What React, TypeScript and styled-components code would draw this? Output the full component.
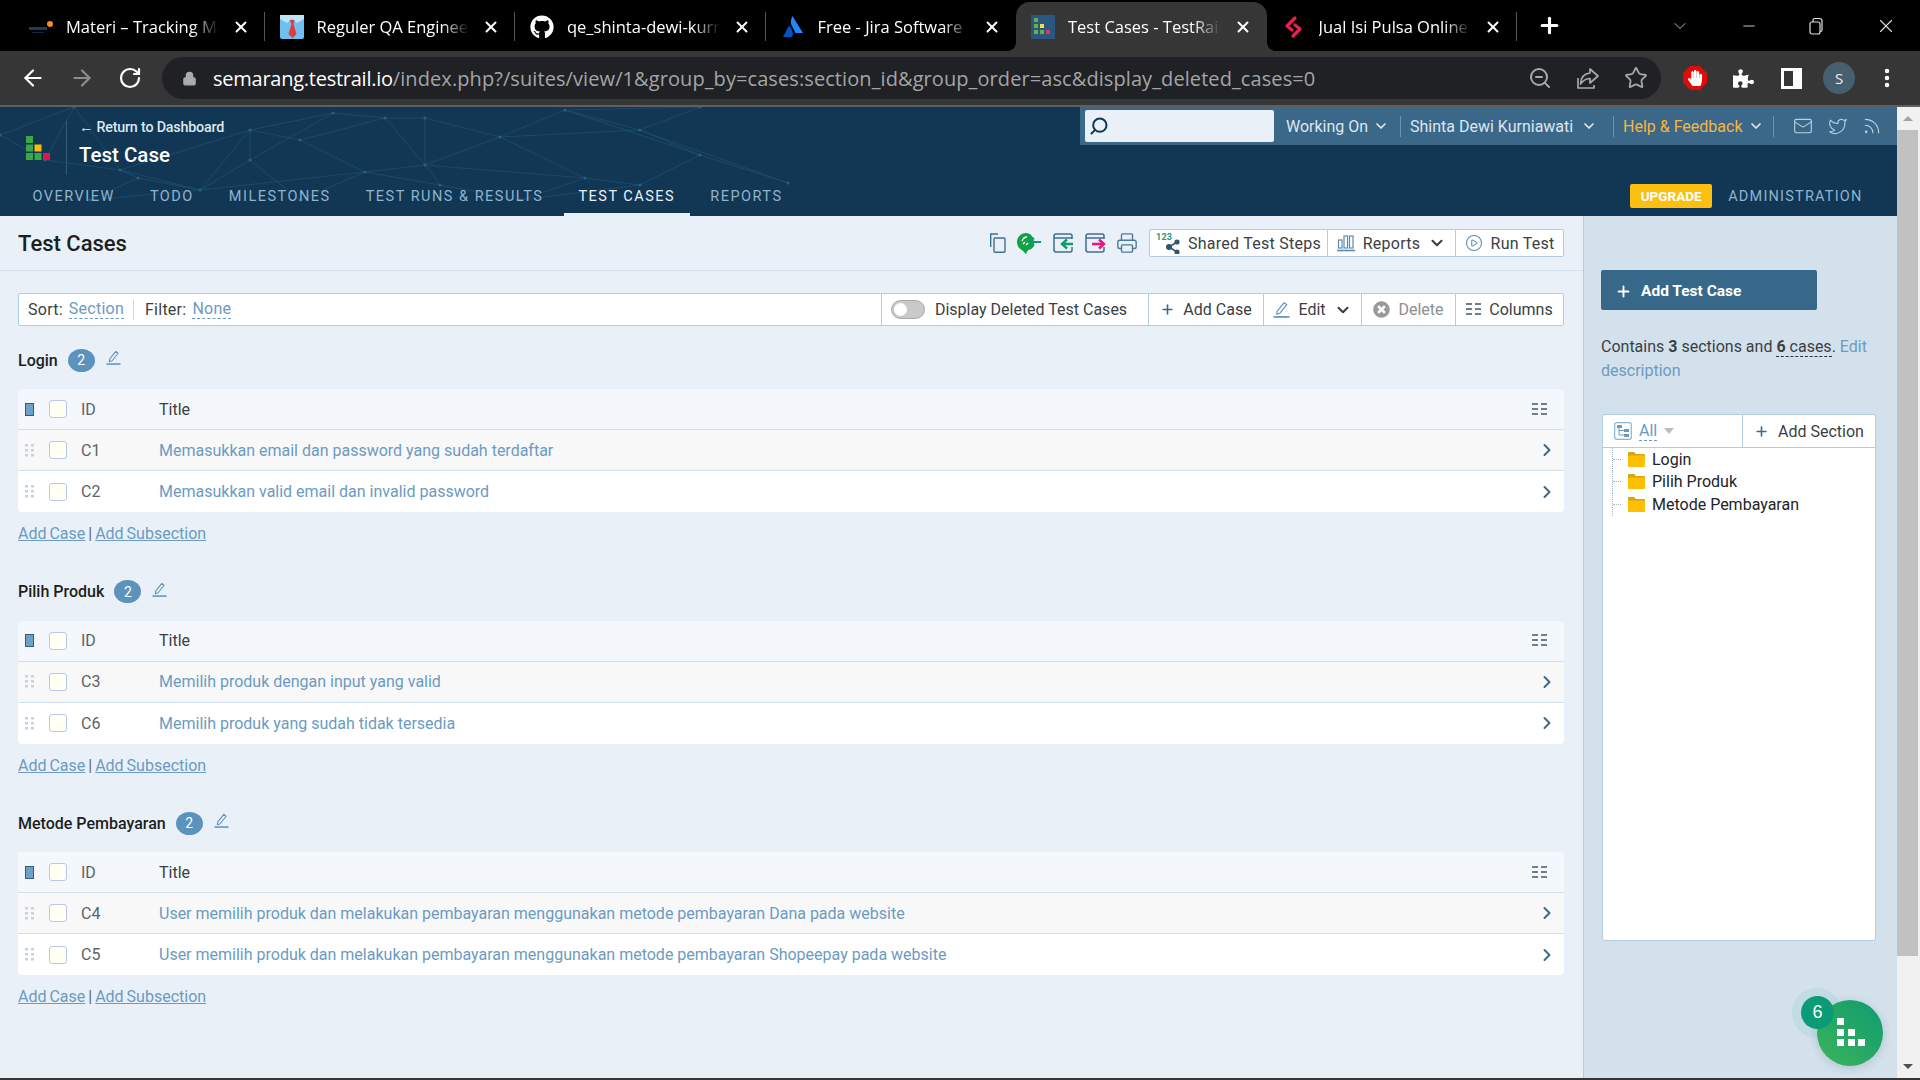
import React from "react";
import styled, { createGlobalStyle } from "styled-components";
import {
  ArrowLeft,
  ArrowRight,
  RotateCw,
  Lock,
  ZoomOut,
  Star,
  MoreVertical,
  ChevronDown,
  ChevronRight,
  Plus,
  Printer,
  Mail,
  Twitter,
  Rss,
  X,
  Minus,
  PlayCircle,
  Search
} from "lucide-react";
import { FaGithub, FaPuzzlePiece, FaHandPaper, FaTimesCircle } from "react-icons/fa";

const PAGE_FONT = `"Roboto", "Liberation Sans", sans-serif`;
const CHROME_FONT = `"Open Sans", "Noto Sans", sans-serif`;

const GlobalStyle = createGlobalStyle`
  html, body { margin: 0; padding: 0; height: 100%; overflow: hidden; }
  #root { height: 100%; }
  * { box-sizing: border-box; }
`;

// --- browser chrome ---

const tabs = [
  { title: "Materi – Tracking Materi", icon: "alterra" },
  { title: "Reguler QA Engineer", icon: "tie" },
  { title: "qe_shinta-dewi-kurniawati", icon: "github" },
  { title: "Free - Jira Software", icon: "jira" },
  { title: "Test Cases - TestRail", icon: "testrail", active: true },
  { title: "Jual Isi Pulsa Online", icon: "pulsa" }
];

const TabIcon: React.FC<{ kind: string }> = ({ kind }) => {
  switch (kind) {
    case "alterra":
      return (
        <svg width="24" height="24" viewBox="0 0 24 24">
          <rect x="0" y="12" width="18" height="3" fill="#1d3a5f" />
          <rect x="3" y="17" width="12" height="1" fill="#16263b" />
          <circle cx="21" cy="9" r="3" fill="#f28a2e" />
        </svg>
      );
    case "tie":
      return (
        <svg width="24" height="24" viewBox="0 0 24 24">
          <rect width="24" height="24" rx="2" fill="#6fc0f0" />
          <path d="M0 0h24v4l-7 4-5-4-5 4-7-4z" fill="#bfe3f8" />
          <path d="M9.5 5h5l-1 4 3 10-4 4-4-4 3-10z" fill="#e5383b" />
        </svg>
      );
    case "github":
      return <FaGithub size={24} color="#fff" />;
    case "jira":
      return (
        <svg width="24" height="24" viewBox="0 0 24 24">
          <path d="M11.5 1c-2 4-2.300 7 0 11l3 6h7.500z" fill="#2684ff" />
          <path d="M8 10.500 2 22h9c1.500-3 1-7-3-11.500z" fill="#0052cc" />
        </svg>
      );
    case "testrail":
      return (
        <svg width="24" height="24" viewBox="0 0 24 24">
          <rect width="24" height="24" fill="#2b5680" />
          <rect x="3" y="3" width="4" height="4" fill="#65b344" />
          <rect x="3" y="9" width="4" height="4" fill="#65b344" />
          <rect x="9" y="9" width="4" height="4" fill="#eee04a" />
          <rect x="3" y="15" width="4" height="4" fill="#65b344" />
          <rect x="9" y="15" width="4" height="4" fill="#65b344" />
          <rect x="15" y="15" width="4" height="4" fill="#e2384f" />
        </svg>
      );
    default:
      return (
        <svg width="24" height="24" viewBox="0 0 24 24" fill="none" stroke="#e3234d" strokeWidth="3.200" strokeLinecap="round" strokeLinejoin="round">
          <path d="M13 3 5 11l5 4" />
          <path d="M13 10l5 4-7 7" />
        </svg>
      );
  }
};

const TabStrip = styled.div`
  height: 51px;
  background: #000;
  display: flex;
  align-items: stretch;
  padding-left: 14px;
  font-family: ${CHROME_FONT};
  flex: none;
`;
const Tab = styled.div<{ $active?: boolean; $divider?: boolean }>`
  width: 250.500px;
  margin-top: 2px;
  padding: 0 15px 0 15px;
  display: flex;
  align-items: center;
  gap: 13px;
  color: #fff;
  font-size: 16.500px;
  border-radius: 14px 14px 0 0;
  background: ${p => (p.$active ? "#363636" : "transparent")};
  position: relative;
  ${p =>
    p.$divider &&
    `&::after {
      content: "";
      position: absolute;
      right: 0;
      top: 10px;
      bottom: 10px;
      width: 1px;
      background: #555;
    }`}
  ${p =>
    p.$active &&
    `&::before, &::after {
      content: "";
      position: absolute;
      bottom: 0;
      width: 8px;
      height: 8px;
    }
    &::before {
      left: -8px;
      background: radial-gradient(circle at 0 0, #000 7.5px, #363636 8px);
    }
    &::after {
      right: -8px;
      background: radial-gradient(circle at 100% 0, #000 7.5px, #363636 8px);
    }`}
`;
const TabTitle = styled.span`
  flex: 1;
  white-space: nowrap;
  overflow: hidden;
  mask-image: linear-gradient(to right, #000 82%, transparent 100%);
`;
const NewTab = styled.div`
  width: 64px;
  display: flex;
  align-items: center;
  justify-content: center;
  color: #fff;
`;
const WindowButtons = styled.div`
  margin-left: auto;
  display: flex;
  align-items: center;
  color: #ddd;
  padding-right: 23px;
  gap: 49.700px;
`;
const RestoreIcon = () => (
  <svg width="18" height="18" viewBox="0 0 18 18" fill="none" stroke="#ddd" strokeWidth="1.200">
    <rect x="3" y="5" width="10" height="12" rx="2" />
    <path d="M6 5V3a1.500 1.500 0 0 1 1.500-1.500h5A2.500 2.500 0 0 1 15 4v9a1.500 1.500 0 0 1-1.500 1.500H13" />
  </svg>
);

const BrowserBar = styled.div`
  height: 56px;
  flex: none;
  background: #363636;
  border-bottom: 2px solid #5f5f5f;
  display: flex;
  align-items: center;
  padding: 0 0 0 20px;
  font-family: ${CHROME_FONT};
`;
const NavIcons = styled.div`
  width: 142px;
  display: flex;
  align-items: center;
  gap: 23px;
`;
const UrlPill = styled.div`
  width: 1499px;
  height: 42px;
  flex: none;
  background: #202124;
  border-radius: 21px;
  display: flex;
  align-items: center;
  padding: 0 13px 0 20px;
  font-size: 20px;
  color: #a3a5a8;
  white-space: nowrap;
`;
const UrlHost = styled.span`
  color: #fff;
  margin-left: 16px;
  letter-spacing: -0.250px;
`;
const UrlPath = styled.span`
  letter-spacing: 0.085px;
`;
const UrlIcons = styled.div`
  margin-left: auto;
  display: flex;
  align-items: center;
  gap: 24px;
`;
const ToolbarIcons = styled.div`
  display: grid;
  grid-template-columns: repeat(5, 48px);
  justify-items: center;
  align-items: center;
  padding-left: 10px;
`;
const StopBadge = styled.div`
  width: 24px;
  height: 24px;
  background: #e20b0b;
  clip-path: polygon(30% 0, 70% 0, 100% 30%, 100% 70%, 70% 100%, 30% 100%, 0 70%, 0 30%);
  display: flex;
  align-items: center;
  justify-content: center;
  color: #fff;
`;
const PanelIcon = styled.div`
  width: 21px;
  height: 21px;
  border: 3px solid #fff;
  border-right-width: 9px;
  background: #363636;
`;
const Avatar = styled.div`
  width: 32px;
  height: 32px;
  border-radius: 50%;
  background: #46606f;
  color: #eee;
  font-size: 15px;
  display: flex;
  align-items: center;
  justify-content: center;
`;
const ShareIcon = () => (
  <svg width="24" height="24" viewBox="0 0 24 24" fill="none" stroke="#a6a8ab" strokeWidth="1.700" strokeLinejoin="round">
    <path d="M2 12v10h16v-3" />
    <path d="M14 3v4C8 7.500 5 11 4.500 18c3-4 5-5.500 9.500-5.500V17l8-7z" />
  </svg>
);

// --- testrail header ---

const Viewport = styled.div`
  flex: 1;
  min-height: 0;
  display: flex;
  border-bottom: 2px solid #363636;
  position: relative;
`;
const PageColumn = styled.div`
  flex: 1;
  min-width: 0;
  display: flex;
  flex-direction: column;
  font-family: ${PAGE_FONT};
`;
const Header = styled.header`
  height: 109px;
  flex: none;
  background: #113754;
  position: relative;
  display: flex;
  flex-direction: column;
  overflow: hidden;
`;
const HeaderPattern = styled.svg`
  position: absolute;
  left: 0;
  top: 0;
`;
const HeaderTop = styled.div`
  height: 71px;
  display: flex;
  align-items: flex-start;
  justify-content: space-between;
  position: relative;
`;
const Brand = styled.div`
  display: flex;
  align-items: center;
  padding: 12px 0 0 26px;
`;
const LogoDivider = styled.div`
  width: 1px;
  height: 54px;
  background: #2f5d7e;
  margin: 0 12px 0 16px;
`;
const BrandText = styled.div`
  color: #dbe7f1;
  margin-bottom: 10px;
`;
const BackLink = styled.div`
  font-size: 14.300px;
  font-weight: 500;
  letter-spacing: -0.200px;
`;
const ProjectName = styled.div`
  font-size: 20.500px;
  font-weight: 500;
  color: #fff;
  margin-top: 8px;
`;
const TopMenu = styled.div`
  width: 817px;
  height: 38px;
  background: #3b6888;
  display: flex;
  align-items: center;
  padding-left: 5px;
  font-size: 16px;
  color: #dbe7f1;
`;
const SearchBox = styled.div`
  width: 189px;
  height: 32px;
  background: #e9f0f7;
  border-radius: 2px;
  display: flex;
  align-items: center;
  padding-left: 4px;
  color: #113754;
  margin-right: 12px;
`;
const MenuItem = styled.div<{ $help?: boolean; $w: number; $gap: number }>`
  width: ${p => p.$w}px;
  height: 21px;
  display: flex;
  align-items: center;
  gap: ${p => p.$gap}px;
  border-right: 1px solid #6b94b3;
  color: ${p => (p.$help ? "#f6b73c" : "#dbe7f1")};
  white-space: nowrap;
  margin-right: 9px;
`;
const MenuIcons = styled.div`
  display: flex;
  align-items: center;
  gap: 14.500px;
  margin-left: 10px;
  color: #bcd2e2;
`;
const NavRow = styled.nav`
  height: 38px;
  display: flex;
  align-items: flex-start;
  justify-content: space-between;
  position: relative;
  padding: 0 34.500px 0 18px;
`;
const NavTabs = styled.div`
  display: flex;
  height: 100%;
  gap: 6px;
`;
const NavTab = styled.div<{ $active?: boolean }>`
  height: 100%;
  padding: 10px 14.500px 0;
  font-size: 14.500px;
  letter-spacing: 1.500px;
  text-transform: uppercase;
  color: ${p => (p.$active ? "#e9f0f7" : "#8fb4cf")};
  box-shadow: ${p => (p.$active ? "inset 0 -3px 0 #e9f0f7" : "none")};
`;
const NavRight = styled.div`
  display: flex;
  align-items: center;
  gap: 16px;
  padding-top: 6px;
`;
const UpgradeBadge = styled.div`
  width: 82px;
  height: 24px;
  background: #fdbf0f;
  border-radius: 2px;
  color: #fff;
  font-size: 13.500px;
  font-weight: 700;
  display: flex;
  align-items: center;
  justify-content: center;
`;
const AdminLink = styled.div`
  font-size: 14.500px;
  letter-spacing: 1.200px;
  color: #8fb4cf;
`;

const patternPoints: [number, number][] = [
  [0, 135], [74, 107], [45, 160], [120, 170], [200, 190], [250, 130], [333, 113],
  [300, 140], [385, 118], [425, 118], [500, 137], [425, 165], [365, 172], [138, 178],
  [565, 110], [640, 130], [700, 155], [585, 178], [640, 185], [788, 183], [700, 107],
  [440, 185], [520, 200], [250, 160], [300, 200], [90, 200]
];
const patternEdges: [number, number][] = [
  [0, 1], [0, 2], [1, 2], [1, 3], [2, 3], [3, 4], [4, 5], [5, 6], [5, 7], [6, 8], [7, 8], [8, 9],
  [9, 10], [9, 11], [10, 11], [8, 11], [11, 12], [7, 12], [4, 12], [3, 13], [4, 13], [10, 14],
  [14, 15], [10, 15], [15, 16], [14, 16], [11, 17], [10, 17], [17, 18], [16, 18], [16, 19], [15, 19],
  [14, 20], [15, 20], [12, 21], [11, 21], [21, 22], [17, 22], [5, 23], [4, 23], [23, 24], [12, 24],
  [13, 25], [4, 25], [18, 22], [6, 23], [3, 5]
];

// --- test cases ---

const Body = styled.div`
  flex: 1;
  min-height: 0;
  display: flex;
`;
const Main = styled.main`
  flex: 1;
  min-width: 0;
  background: #e9f0f7;
  color: #3a3f44;
  font-size: 16px;
`;
const TitleBar = styled.div`
  height: 55px;
  border-bottom: 1px solid #d2e1ec;
  display: flex;
  align-items: center;
  justify-content: space-between;
  padding: 0 19px 0 18px;
`;
const PageTitle = styled.h1`
  margin: 1px 0 0;
  font-size: 22px;
  font-weight: 500;
  color: #1c1f22;
`;
const TitleActions = styled.div`
  display: flex;
  align-items: center;
  gap: 11px;
`;
const IconRow = styled.div`
  display: flex;
  align-items: center;
  gap: 10px;
  color: #4a7a9c;
`;
const ButtonGroup = styled.div<{ $height: number }>`
  height: ${p => p.$height}px;
  display: flex;
  align-items: stretch;
  background: #fff;
  border: 1px solid #b3cde0;
  border-radius: 2px;
`;
const TitleGroup = styled(ButtonGroup)`
  letter-spacing: 0.250px;
`;
const GroupButton = styled.div<{ $w: number; $muted?: boolean }>`
  width: ${p => p.$w}px;
  display: flex;
  align-items: center;
  justify-content: center;
  gap: 8px;
  white-space: nowrap;
  color: ${p => (p.$muted ? "#8b8f93" : "#3a3f44")};
  & + & {
    border-left: 1px solid #b3cde0;
  }
`;
const ToggleButton = styled(GroupButton)`
  gap: 10px;
  padding-right: 12px;
`;
const Content = styled.div`
  padding: 22px 19px 0 18px;
`;
const FilterSide = styled.div`
  width: 863px;
  display: flex;
  align-items: center;
  padding-left: 9px;
  border-right: 1px solid #b3cde0;
  letter-spacing: 0.250px;
`;
const FilterPart = styled.div`
  height: 20px;
  display: flex;
  align-items: center;
  gap: 6px;
  & + & {
    margin-left: 9px;
    padding-left: 11px;
    border-left: 1px solid #c8d9e6;
  }
`;
const DashedLink = styled.span`
  color: #6b9bc2;
  border-bottom: 1px dashed #6b9bc2;
  line-height: 18px;
`;
const Toggle = styled.div`
  width: 34px;
  height: 19px;
  border-radius: 10px;
  background: #c9c9c9;
  border: 1px solid #a9a9a9;
  padding: 2px;
`;
const ToggleKnob = styled.div`
  width: 13px;
  height: 13px;
  border-radius: 50%;
  background: #fff;
`;
const Section = styled.section`
  height: 231.500px;
  padding-top: 22px;
`;
const SectionHead = styled.div`
  height: 24px;
  display: flex;
  align-items: center;
  margin-bottom: 17px;
`;
const SectionName = styled.div`
  font-weight: 500;
  color: #1c1f22;
  margin-right: 10px;
`;
const CountBadge = styled.div`
  width: 27px;
  height: 23px;
  border-radius: 50%;
  background: #5b93bd;
  color: #fff;
  font-size: 14px;
  display: flex;
  align-items: center;
  justify-content: center;
  margin-right: 11px;
`;
const SectionEdit = styled.span`
  display: flex;
  margin-bottom: 5px;
`;
const Table = styled.div`
  border-radius: 4px;
  overflow: hidden;
`;
const Row = styled.div<{ $bg: string }>`
  height: 41px;
  background: ${p => p.$bg};
  border-bottom: 1px solid #d2e1ec;
  display: grid;
  grid-template-columns: 24px 32px 78px 1fr 32px;
  align-items: center;
  padding-left: 7px;
  &:last-child {
    border-bottom: none;
  }
`;
const CheckBox = styled.div`
  width: 18px;
  height: 18px;
  background: #fffff2;
  border: 1px solid #b9c6ee;
  border-radius: 3px;
`;
const CaseId = styled.span`
  color: #5c6268;
`;
const CaseTitle = styled.span<{ $link?: boolean }>`
  color: ${p => (p.$link ? "#6b9bc2" : "#3a3f44")};
`;
const RowEnd = styled.div`
  color: #3a6b8f;
  display: flex;
  margin-left: 5px;
`;
const SectionLinks = styled.div`
  margin-top: 12px;
  color: #5f6b75;
  word-spacing: -1px;
`;
const Underlined = styled.a`
  color: #6b9bc2;
  text-decoration: underline;
`;

// --- sidebar ---

const Sidebar = styled.aside`
  width: 314px;
  flex: none;
  background: #d2e1ec;
  border-left: 1px solid #b3cde0;
  padding: 54px 21px 0 17px;
  font-size: 16px;
  color: #3a3f44;
`;
const AddButton = styled.div`
  width: 216px;
  height: 40px;
  background: #376789;
  border-radius: 2px;
  color: #fff;
  font-weight: 700;
  font-size: 15.500px;
  display: flex;
  align-items: center;
  padding: 2px 0 0 14px;
  gap: 9px;
`;
const Summary = styled.p`
  margin: 25px 0 0;
  line-height: 24px;
  white-space: nowrap;
  strong {
    font-weight: 700;
  }
`;
const SummaryCases = styled.span`
  border-bottom: 1px dashed #333;
  line-height: 18px;
  display: inline-block;
`;
const SummaryLink = styled.span`
  color: #6b9bc2;
`;
const TreeBox = styled.div`
  width: 274px;
  height: 527px;
  margin: 31px 0 0 1px;
  background: #fff;
  border: 1px solid #b3cde0;
  border-radius: 3px;
`;
const TreeHead = styled.div`
  height: 33px;
  border-bottom: 1px solid #b3cde0;
  display: flex;
`;
const TreeAll = styled.div`
  width: 140px;
  border-right: 1px solid #b3cde0;
  display: flex;
  align-items: center;
  padding-left: 11px;
  gap: 7px;
`;
const TreeAdd = styled.div`
  flex: 1;
  display: flex;
  align-items: center;
  justify-content: center;
  gap: 9px;
`;
const TreeItem = styled.div`
  height: 22.500px;
  display: flex;
  align-items: center;
  margin-left: 9px;
  gap: 7px;
  color: #20242a;
  border-left: 1px dotted #9cb7cc;
`;
const TreeList = styled.div``;
const TreeTick = styled.div`
  width: 8px;
  border-top: 1px dotted #9cb7cc;
`;
const Caret = styled.div`
  width: 0;
  height: 0;
  border-left: 5px solid transparent;
  border-right: 5px solid transparent;
  border-top: 6px solid #b9bdc1;
`;

// --- scrollbar and chat widget ---

const ScrollRail = styled.div`
  width: 23px;
  flex: none;
  background: #f1f1f1;
  display: flex;
  flex-direction: column;
  align-items: flex-start;
`;
const ScrollArrow = styled.div<{ $down?: boolean }>`
  width: 21px;
  height: 23px;
  display: flex;
  align-items: center;
  justify-content: center;
  &::before {
    content: "";
    border-left: 5px solid transparent;
    border-right: 5px solid transparent;
    ${p => (p.$down ? "border-top: 5px solid #505050;" : "border-bottom: 5px solid #a3a3a3;")}
  }
`;
const ScrollThumb = styled.div`
  width: 21px;
  height: 826px;
  background: #c1c1c1;
`;
const ScrollGap = styled.div`
  flex: 1;
`;
const WidgetHalo = styled.div`
  position: absolute;
  left: 1792px;
  top: 881px;
  width: 50px;
  height: 50px;
  border-radius: 50%;
  background: #c3dbe3;
`;
const Widget = styled.div`
  position: absolute;
  left: 1817px;
  top: 893px;
  width: 66px;
  height: 66px;
  border-radius: 50%;
  background: linear-gradient(45deg, #3cb55a, #0f9b70);
  box-shadow: 0 2px 8px rgba(40, 80, 90, 0.2);
  display: grid;
  grid-template-columns: repeat(3, 7px);
  grid-template-rows: repeat(3, 7px);
  gap: 3.600px;
  padding: 18px 0 0 20px;
`;
const WidgetCell = styled.div<{ $on?: boolean }>`
  background: ${p => (p.$on ? "#fff" : "transparent")};
`;
const WidgetCount = styled.div`
  position: absolute;
  left: 1801px;
  top: 889px;
  width: 33px;
  height: 33px;
  border-radius: 50%;
  background: #0b9b76;
  color: #fff;
  font-family: "Liberation Sans", sans-serif;
  font-size: 18px;
  display: flex;
  align-items: center;
  justify-content: center;
`;

// --- small drawn icons ---

const BrandLogo = () => (
  <svg width="24" height="24" viewBox="0 0 24 24">
    <rect x="0" y="0" width="7" height="7" fill="#39a845" />
    <rect x="0" y="8.500" width="7" height="7" fill="#39a845" />
    <rect x="8.500" y="8.500" width="7" height="7" fill="#f5bd0c" />
    <rect x="0" y="17" width="7" height="7" fill="#39a845" />
    <rect x="8.500" y="17" width="7" height="7" fill="#39a845" />
    <rect x="17" y="17" width="7" height="7" fill="#e5134c" />
  </svg>
);
const PencilLine = ({ c = "#5b93bd", s = 15 }: { c?: string; s?: number }) => (
  <svg width={s} height={s} viewBox="0 0 16 16" fill="none" stroke={c} strokeWidth="1.100" strokeLinejoin="round">
    <path d="M4 9.500 10.500 1.500l2.500 2L6.500 11.500l-3 1z" />
    <path d="M0.500 15h15" strokeWidth="1.600" />
  </svg>
);
const ColumnsIcon = ({ c = "#6d7f8d" }: { c?: string }) => (
  <svg width="15" height="13" viewBox="0 0 15 13" fill={c}>
    {[0, 5, 10].map(y => (
      <React.Fragment key={y}>
        <rect x="0" y={y} width="6" height="2" />
        <rect x="9" y={y} width="6" height="2" />
      </React.Fragment>
    ))}
  </svg>
);
const Grip = ({ c = "#c5d3df" }: { c?: string }) => (
  <svg width="9" height="13" viewBox="0 0 9 13" fill={c}>
    {[0, 5, 10].map(y => (
      <React.Fragment key={y}>
        <rect x="0" y={y} width="3" height="2.500" />
        <rect x="6" y={y} width="3" height="2.500" />
      </React.Fragment>
    ))}
  </svg>
);
const HeadMark = () => (
  <svg width="9" height="13" viewBox="0 0 9 13">
    <rect x="0.500" y="0.500" width="8" height="12" fill="#6fa0c6" stroke="#2f5d7e" />
  </svg>
);
const CopyIcon = () => (
  <svg width="17" height="20" viewBox="0 0 17 20" fill="none" stroke="#3f6f92" strokeWidth="1.400">
    <path d="M9 1H1.700v13" />
    <rect x="5" y="5" width="11" height="14.300" rx="1" />
  </svg>
);
const SwitchIcon = ({ color, flip }: { color: string; flip?: boolean }) => (
  <svg width="22" height="22" viewBox="0 0 22 22" fill="none">
    <path d="M20 7V4a2 2 0 0 0-2-2H4a2 2 0 0 0-2 2v14a2 2 0 0 0 2 2h14a2 2 0 0 0 2-2v-3M2 6h18" stroke="#3f6f92" strokeWidth="1.500" />
    {flip ? (
      <path d="M8 12h12M15 7.500l5 4.500-5 4.500" stroke={color} strokeWidth="2.400" />
    ) : (
      <path d="M21 12H10M15 7.500 10 12l5 4.500" stroke={color} strokeWidth="2.400" />
    )}
  </svg>
);
const ImportIcon = () => (
  <svg width="26" height="22" viewBox="0 0 26 22" fill="none">
    <path d="M10 1c-5 0-9 4-9 9 0 4 2.500 7 5.500 8.500L10 22l2-4c4.500-.5 6-3 6-8 0-5-3.500-9-8-9z" fill="#12a23f" />
    <path d="M6 9c1-2.500 2.500-4 5-4M7 12l2-2M10 13l2-2" stroke="#fff" strokeWidth="1.400" />
    <path d="M25 10H14M18 6l-4 4 4 4" stroke="#0f9b70" strokeWidth="2" />
  </svg>
);
const SharedStepsIcon = () => (
  <svg width="24" height="22" viewBox="0 0 24 22">
    <text x="0" y="8" fontSize="9" fontWeight="700" fill="#16a07a" fontFamily="Roboto, sans-serif">123</text>
    <g fill="#2f5570">
      <circle cx="13" cy="15" r="3" />
      <circle cx="21" cy="10" r="2.600" />
      <circle cx="21" cy="20" r="2.600" />
    </g>
    <path d="M21 10l-8 5 8 5" stroke="#2f5570" strokeWidth="1.500" fill="none" />
  </svg>
);
const ReportsIcon = () => (
  <svg width="18" height="18" viewBox="0 0 18 18" fill="none" stroke="#5b8aad" strokeWidth="1.200">
    <rect x="1.500" y="6" width="3.500" height="8" />
    <rect x="7" y="2" width="3.500" height="12" />
    <rect x="12.500" y="2" width="3.500" height="12" />
    <path d="M0 16.500h18" strokeWidth="1.600" />
  </svg>
);
const TreeIcon = () => (
  <svg width="18" height="18" viewBox="0 0 18 18" fill="none">
    <rect x="0.700" y="0.700" width="16.600" height="16.600" rx="2" stroke="#8fb4cf" strokeWidth="1.200" />
    <path d="M5 5v8h6M5 8.500h6" stroke="#6b9bc2" />
    <rect x="3" y="3" width="5" height="3" fill="#6b9bc2" />
    <rect x="10" y="7" width="5" height="3" fill="#6b9bc2" />
    <rect x="10" y="12" width="5" height="3" fill="#6b9bc2" />
  </svg>
);
const FolderIcon = () => (
  <svg width="17" height="15" viewBox="0 0 17 15">
    <path d="M0 1a1 1 0 0 1 1-1h5l2 2h8a1 1 0 0 1 1 1v2H0z" fill="#d9a60a" />
    <rect x="0" y="3.500" width="17" height="11.500" rx="1" fill="#fdbf00" />
  </svg>
);

const sections = [
  {
    name: "Login",
    cases: [
      ["C1", "Memasukkan email dan password yang sudah terdaftar"],
      ["C2", "Memasukkan valid email dan invalid password"]
    ]
  },
  {
    name: "Pilih Produk",
    cases: [
      ["C3", "Memilih produk dengan input yang valid"],
      ["C6", "Memilih produk yang sudah tidak tersedia"]
    ]
  },
  {
    name: "Metode Pembayaran",
    cases: [
      ["C4", "User memilih produk dan melakukan pembayaran menggunakan metode pembayaran Dana pada website"],
      ["C5", "User memilih produk dan melakukan pembayaran menggunakan metode pembayaran Shopeepay pada website"]
    ]
  }
];

const navItems = ["Overview", "Todo", "Milestones", "Test Runs & Results", "Test Cases", "Reports"];
const widgetCells = [true, false, false, true, true, false, true, true, true];

const App: React.FC = () => {
  return (
    <Screen>
      <GlobalStyle />
      <TabStrip>
        {tabs.map((t, i) => (
          <Tab key={t.title} $active={t.active} $divider={!t.active && i !== 3}>
            <TabIcon kind={t.icon} />
            <TabTitle>{t.title}</TabTitle>
            <X size={18} strokeWidth={2.600} />
          </Tab>
        ))}
        <NewTab>
          <Plus size={25} strokeWidth={3} />
        </NewTab>
        <WindowButtons>
          <ChevronDown size={20} strokeWidth={1} />
          <Minus size={18} strokeWidth={1.200} />
          <RestoreIcon />
          <X size={22} strokeWidth={1.200} />
        </WindowButtons>
      </TabStrip>
      <BrowserBar>
        <NavIcons>
          <ArrowLeft size={26} color="#fff" strokeWidth={2} />
          <ArrowRight size={26} color="#8a8c8e" strokeWidth={2} />
          <RotateCw size={24} color="#fff" strokeWidth={2.200} />
        </NavIcons>
        <UrlPill>
          <Lock size={15} color="#a9abae" fill="#a9abae" />
          <UrlHost>semarang.testrail.io</UrlHost>
          <UrlPath>/index.php?/suites/view/1&amp;group_by=cases:section_id&amp;group_order=asc&amp;display_deleted_cases=0</UrlPath>
          <UrlIcons>
            <ZoomOut size={24} color="#a6a8ab" />
            <ShareIcon />
            <Star size={24} color="#a6a8ab" strokeWidth={1.800} />
          </UrlIcons>
        </UrlPill>
        <ToolbarIcons>
          <StopBadge>
            <FaHandPaper size={16} />
          </StopBadge>
          <FaPuzzlePiece size={21} color="#fff" />
          <PanelIcon />
          <Avatar>S</Avatar>
          <MoreVertical size={24} color="#fff" strokeWidth={2.500} />
        </ToolbarIcons>
      </BrowserBar>
      <Viewport>
        <PageColumn>
          <Header>
            <HeaderPattern width="1000" height="109" viewBox="0 107 1000 109">
              {patternEdges.map(([a, b]) => (
                <line
                  key={`${a}-${b}`}
                  x1={patternPoints[a][0]}
                  y1={patternPoints[a][1]}
                  x2={patternPoints[b][0]}
                  y2={patternPoints[b][1]}
                  stroke="#1f4e6e"
                  strokeWidth="0.800"
                />
              ))}
              {patternPoints.map(([x, y]) => (
                <circle key={`${x}-${y}`} cx={x} cy={y} r="1.600" fill="#2b5f80" />
              ))}
            </HeaderPattern>
            <HeaderTop>
              <Brand>
                <BrandLogo />
                <LogoDivider />
                <BrandText>
                  <BackLink>← Return to Dashboard</BackLink>
                  <ProjectName>Test Case</ProjectName>
                </BrandText>
              </Brand>
              <TopMenu>
                <SearchBox>
                  <Search size={20} strokeWidth={2.400} style={{ transform: "scaleX(-1)" }} />
                </SearchBox>
                <MenuItem $w={115} $gap={5}>
                  Working On <ChevronDown size={16} strokeWidth={2.600} />
                </MenuItem>
                <MenuItem $w={204} $gap={8}>
                  Shinta Dewi Kurniawati <ChevronDown size={16} strokeWidth={2.600} />
                </MenuItem>
                <MenuItem $w={151} $gap={5} $help>
                  Help &amp; Feedback <ChevronDown size={16} strokeWidth={2.600} color="#dbe7f1" />
                </MenuItem>
                <MenuIcons>
                  <Mail size={20} strokeWidth={1.300} />
                  <Twitter size={20} strokeWidth={1.300} />
                  <Rss size={20} strokeWidth={1.300} />
                </MenuIcons>
              </TopMenu>
            </HeaderTop>
            <NavRow>
              <NavTabs>
                {navItems.map(n => (
                  <NavTab key={n} $active={n === "Test Cases"}>
                    {n}
                  </NavTab>
                ))}
              </NavTabs>
              <NavRight>
                <UpgradeBadge>UPGRADE</UpgradeBadge>
                <AdminLink>ADMINISTRATION</AdminLink>
              </NavRight>
            </NavRow>
          </Header>
          <Body>
            <Main>
              <TitleBar>
                <PageTitle>Test Cases</PageTitle>
                <TitleActions>
                  <IconRow>
                    <CopyIcon />
                    <ImportIcon />
                    <SwitchIcon color="#0f9b70" />
                    <SwitchIcon color="#e8187c" flip />
                    <Printer size={22} strokeWidth={1.500} />
                  </IconRow>
                  <TitleGroup $height={28}>
                    <GroupButton $w={177}>
                      <SharedStepsIcon />
                      Shared Test Steps
                    </GroupButton>
                    <GroupButton $w={128}>
                      <ReportsIcon />
                      Reports
                      <ChevronDown size={18} strokeWidth={2.800} />
                    </GroupButton>
                    <GroupButton $w={108}>
                      <PlayCircle size={18} color="#5b8aad" strokeWidth={1.400} />
                      Run Test
                    </GroupButton>
                  </TitleGroup>
                </TitleActions>
              </TitleBar>
              <Content>
                <ButtonGroup $height={33}>
                  <FilterSide>
                    <FilterPart>
                      Sort: <DashedLink>Section</DashedLink>
                    </FilterPart>
                    <FilterPart>
                      Filter: <DashedLink>None</DashedLink>
                    </FilterPart>
                  </FilterSide>
                  <ToggleButton $w={266}>
                    <Toggle>
                      <ToggleKnob />
                    </Toggle>
                    <span>Display Deleted Test Cases</span>
                  </ToggleButton>
                  <GroupButton $w={115}>
                    <Plus size={15} color="#3a6b8f" strokeWidth={2.600} />
                    Add Case
                  </GroupButton>
                  <GroupButton $w={98}>
                    <PencilLine s={17} />
                    Edit
                    <ChevronDown size={18} strokeWidth={2.800} />
                  </GroupButton>
                  <GroupButton $w={94} $muted>
                    <FaTimesCircle size={17} color="#9a9a9a" />
                    Delete
                  </GroupButton>
                  <GroupButton $w={108}>
                    <ColumnsIcon />
                    Columns
                  </GroupButton>
                </ButtonGroup>
                {sections.map(s => (
                  <Section key={s.name}>
                    <SectionHead>
                      <SectionName>{s.name}</SectionName>
                      <CountBadge>{s.cases.length}</CountBadge>
                      <SectionEdit>
                        <PencilLine />
                      </SectionEdit>
                    </SectionHead>
                    <Table>
                      <Row $bg="#f4f8fc">
                        <HeadMark />
                        <CheckBox />
                        <CaseId>ID</CaseId>
                        <CaseTitle>Title</CaseTitle>
                        <ColumnsIcon />
                      </Row>
                      {s.cases.map(([id, title], i) => (
                        <Row key={id} $bg={i === 0 ? "#f8f8f8" : "#fff"}>
                          <Grip />
                          <CheckBox />
                          <CaseId>{id}</CaseId>
                          <CaseTitle $link>{title}</CaseTitle>
                          <RowEnd>
                            <ChevronRight size={20} strokeWidth={2.400} />
                          </RowEnd>
                        </Row>
                      ))}
                    </Table>
                    <SectionLinks>
                      <Underlined>Add Case</Underlined> | <Underlined>Add Subsection</Underlined>
                    </SectionLinks>
                  </Section>
                ))}
              </Content>
            </Main>
            <Sidebar>
              <AddButton>
                <Plus size={17} strokeWidth={2.600} />
                Add Test Case
              </AddButton>
              <Summary>
                Contains <strong>3</strong> sections and <SummaryCases><strong>6</strong> cases</SummaryCases>.{" "}
                <SummaryLink>Edit</SummaryLink>
                <br />
                <SummaryLink>description</SummaryLink>
              </Summary>
              <TreeBox>
                <TreeHead>
                  <TreeAll>
                    <TreeIcon />
                    <DashedLink>All</DashedLink>
                    <Caret />
                  </TreeAll>
                  <TreeAdd>
                    <Plus size={15} color="#3a6b8f" strokeWidth={2.600} />
                    Add Section
                  </TreeAdd>
                </TreeHead>
                <TreeList>
                  {sections.map(s => (
                    <TreeItem key={s.name}>
                      <TreeTick />
                      <FolderIcon />
                      {s.name}
                    </TreeItem>
                  ))}
                </TreeList>
              </TreeBox>
            </Sidebar>
          </Body>
        </PageColumn>
        <ScrollRail>
          <ScrollArrow />
          <ScrollThumb />
          <ScrollGap />
          <ScrollArrow $down />
        </ScrollRail>
        <WidgetHalo />
        <Widget>
          {widgetCells.map((on, i) => (
            <WidgetCell key={i} $on={on} />
          ))}
        </Widget>
        <WidgetCount>6</WidgetCount>
      </Viewport>
    </Screen>
  );
};

const Screen = styled.div`
  width: 1920px;
  height: 1080px;
  display: flex;
  flex-direction: column;
  overflow: hidden;
`;

export default App;
